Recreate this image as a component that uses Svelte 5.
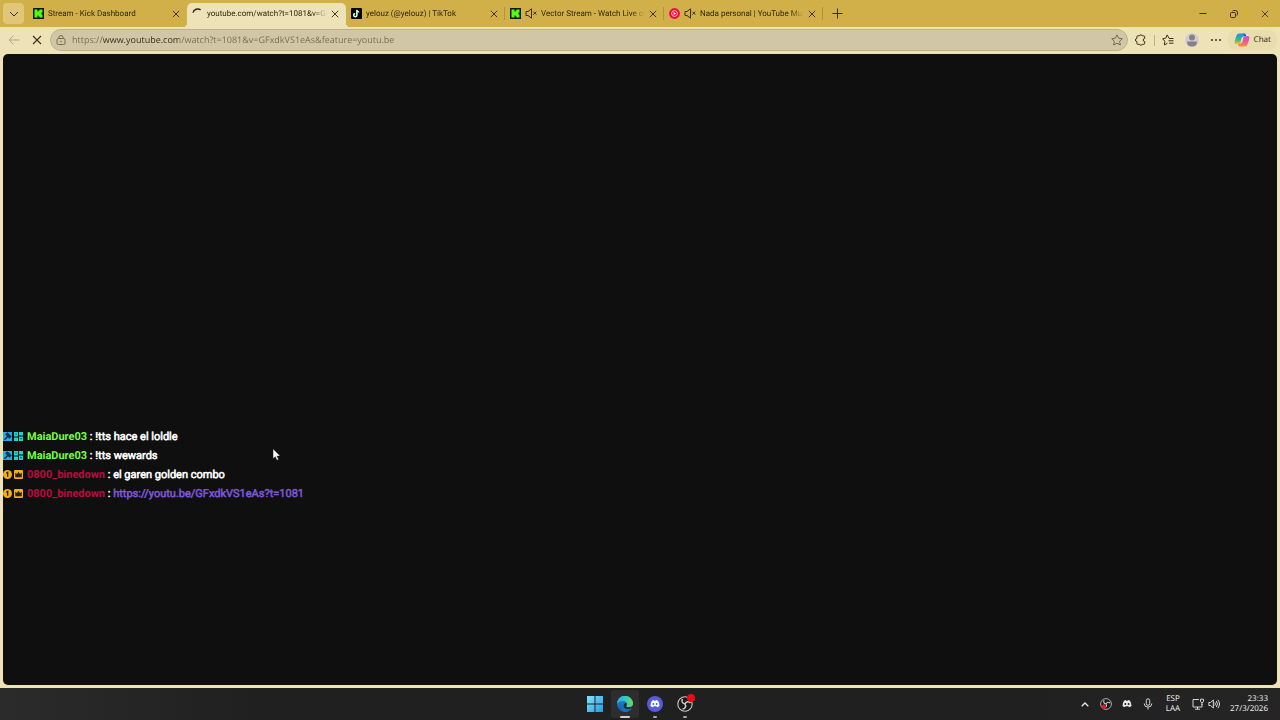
<script lang="ts">
  type Icon = 'kick' | 'spinner' | 'tiktok' | 'ytmusic';
  type Tab = { icon: Icon; title: string; muted?: boolean; active?: boolean };
  type Message = { user: string; role: 'mod' | 'top'; text: string; link?: boolean };

  const tabs: Tab[] = [
    { icon: 'kick', title: 'Stream - Kick Dashboard' },
    { icon: 'spinner', title: 'youtube.com/watch?t=1081&v=GF', active: true },
    { icon: 'tiktok', title: 'yelouz (@yelouz) | TikTok' },
    { icon: 'kick', title: 'Vector Stream - Watch Live on', muted: true },
    { icon: 'ytmusic', title: 'Nada personal | YouTube Music', muted: true }
  ];

  const messages: Message[] = [
    { user: 'MaiaDure03', role: 'mod', text: '!tts hace el loldle' },
    { user: 'MaiaDure03', role: 'mod', text: '!tts wewards' },
    { user: '0800_binedown', role: 'top', text: 'el garen golden combo' },
    { user: '0800_binedown', role: 'top', text: 'https://youtu.be/GFxdkVS1eAs?t=1081', link: true }
  ];

  let address = $state('https://www.youtube.com/watch?t=1081&v=GFxdkVS1eAs&feature=youtu.be');
</script>

{#snippet cross(size: number)}
  <svg width={size} height={size} viewBox="0 0 10 10" fill="none" stroke="currentColor" stroke-width="1.1">
    <path d="M1 1l8 8M9 1L1 9" />
  </svg>
{/snippet}

{#snippet favicon(icon: Icon)}
  <svg class="favicon" viewBox="0 0 11 11">
    {#if icon === 'kick'}
      <rect width="11" height="11" fill="#101c08" />
      <path d="M1.5 1.5h3v2h1v-1h1v-1h3v3h-1v2h1v3h-3v-1h-1v-1h-1v2h-3z" fill="#53fc18" />
    {:else if icon === 'spinner'}
      <path d="M1 4.6A5 5 0 0 1 8.6 1.8" fill="none" stroke="#2b2415" stroke-width="1.5" />
    {:else if icon === 'tiktok'}
      <rect width="11" height="11" rx="1" fill="#050505" />
      <path d="M6 2v5.2a1.6 1.6 0 1 1-1.8-1.6" fill="none" stroke="#25f4ee" stroke-width="1.1" transform="translate(-.4 -.2)" />
      <path d="M6 2v5.2a1.6 1.6 0 1 1-1.8-1.6M6 2.2c.2 1.2 1 1.8 2.2 1.9" fill="none" stroke="#fff" stroke-width="1.2" />
    {:else}
      <circle cx="5.5" cy="5.5" r="5.4" fill="#f5083e" />
      <circle cx="5.5" cy="5.5" r="2.9" fill="none" stroke="#fff" stroke-width=".7" />
      <path d="M4.6 3.9v3.2l2.6-1.6z" fill="#fff" />
    {/if}
  </svg>
{/snippet}

{#snippet obs()}
  <circle cx="8" cy="8" r="7.200" fill="#1b1b1b" stroke="#c9c9c9" stroke-width="1.100" />
  <path d="M8 8C5 7.5 4.300 5 5.500 3M8 8c1.200-2.800 4-3 5.500-1M8 8c1.500 2.300.200 4.800-2.500 5" fill="none" stroke="#c9c9c9" stroke-width="1.500" />
{/snippet}

{#snippet discordFace()}
  <path fill-rule="evenodd" d="M4 3.500Q5.500 2.700 6.500 2.700l.5.900h2l.5-.9q1 0 2.500.8 2.300 3.500 2 7.300-1.500 1.200-3.300 1.600l-.8-1.300H6.100l-.8 1.300Q3.500 12 2 10.800 1.700 7 4 3.500zM5.800 6.600a1.300 1.400 0 1 0 0 2.800 1.300 1.400 0 1 0 0-2.800zm4.400 0a1.300 1.400 0 1 0 0 2.800 1.300 1.400 0 1 0 0-2.800z" />
{/snippet}

<div class="desktop">
  <div class="browser">
    <header class="tab-strip">
      <button class="tab-menu" aria-label="Tab actions">
        <svg width="10" height="6" viewBox="0 0 10 6" fill="none" stroke="currentColor"><path d="M1 1l4 4 4-4" /></svg>
      </button>
      <div class="tabs" role="tablist">
        {#each tabs as tab}
          <div class="tab" class:active={tab.active} role="tab" aria-selected={!!tab.active} tabindex="0">
            {@render favicon(tab.icon)}
            {#if tab.muted}
              <svg class="mute" viewBox="0 0 12 11" fill="none" stroke="currentColor">
                <path d="M1 3.500h2L6.500.8v9.400L3 7.500H1zM8.300 3.700l3 3M11.300 3.700l-3 3" />
              </svg>
            {/if}
            <span class="title">{tab.title}</span>
            <button class="close" aria-label="Close tab">{@render cross(8)}</button>
          </div>
        {/each}
      </div>
      <button class="new-tab" aria-label="New tab">
        <svg width="11" height="11" viewBox="0 0 11 11" fill="none" stroke="currentColor"><path d="M5.500 0.500v10M.5 5.500h10" /></svg>
      </button>
      <div class="window-controls">
        <button aria-label="Minimize">
          <svg width="8" height="8" viewBox="0 0 8 8" stroke="currentColor"><path d="M.5 3.500h7" /></svg>
        </button>
        <button aria-label="Restore">
          <svg width="8" height="8" viewBox="0 0 8 8" fill="none" stroke="currentColor">
            <rect x=".5" y="2.500" width="5" height="5" rx="1" /><path d="M2.500 1q.3-.5 1-.5h2q2 0 2 2v2q0 .7-.5 1" />
          </svg>
        </button>
        <button aria-label="Close window">{@render cross(8)}</button>
      </div>
    </header>

    <nav class="toolbar">
      <button class="back" aria-label="Back" disabled>
        <svg width="12" height="10" viewBox="0 0 12 10" fill="none" stroke="currentColor"><path d="M5.500.8L1 5l4.500 4.200M1 5h10.500" /></svg>
      </button>
      <button class="stop" aria-label="Stop loading">{@render cross(10)}</button>
      <div class="address">
        <svg width="10" height="10" viewBox="0 0 10 10" fill="none" stroke="currentColor">
          <rect x="1" y="3.500" width="8" height="6" rx="1.300" /><path d="M3 3.500V2.200a2 1.700 0 0 1 4 0v1.300" /><circle cx="5" cy="6.500" r=".4" />
        </svg>
        <input type="text" aria-label="Address" spellcheck="false" bind:value={address} />
        <button aria-label="Add to favorites">
          <svg width="12" height="12" viewBox="0 0 12 12" fill="none" stroke="currentColor">
            <path stroke-linejoin="round" d="M6 .8l1.600 3.400 3.700.5-2.700 2.600.7 3.700L6 9.200 2.700 11l.7-3.700L.7 4.700l3.700-.5z" />
          </svg>
        </button>
      </div>
      <button class="extensions" aria-label="Extensions">
        <svg width="12" height="12" viewBox="0 0 12 12" fill="none" stroke="currentColor">
          <path d="M2.800 1.800h1.700a1.400 1.400 0 0 1 2.700 0h1.600q.9 0 .9.900v1.800a1.500 1.500 0 1 0 0 3v1.900q0 .9-.9.900H7.200a1.400 1.400 0 0 1-2.700 0H2.800q-.9 0-.9-.9V7.500a1.400 1.400 0 0 1 0-3V2.700q0-.9.900-.9z" />
        </svg>
      </button>
      <span class="divider"></span>
      <button class="favorites" aria-label="Favorites">
        <svg width="12" height="12" viewBox="0 0 12 12" fill="none" stroke="currentColor">
          <path d="M7 4.200L5.200.9 3.700 4.200.6 4.800l2.200 2.400-.4 3.700 3-1.600M7 4.500h4.500M6.500 6.800h5M7 9.200h4.500" />
        </svg>
      </button>
      <button class="profile" aria-label="Profile">
        <svg width="14" height="14" viewBox="0 0 14 14">
          <circle cx="7" cy="7" r="7" fill="#d3cdca" /><circle cx="7" cy="4.600" r="3" fill="#85808b" />
          <path d="M2 9.500q0-1 1-1h8q1 0 1 1Q11.500 13.500 7 13.500T2 9.500z" fill="#85808b" />
        </svg>
      </button>
      <button class="more" aria-label="Settings and more">
        <svg width="10" height="2" viewBox="0 0 10 2" fill="currentColor"><circle cx="1" cy="1" r="1" /><circle cx="5" cy="1" r="1" /><circle cx="9" cy="1" r="1" /></svg>
      </button>
      <button class="copilot">
        <svg width="16" height="14" viewBox="0 0 16 14">
          <defs>
            <linearGradient id="cp-a" x1="0" y1="0" x2="0" y2="1"><stop stop-color="#1793e8" /><stop offset=".6" stop-color="#37b98a" /><stop offset="1" stop-color="#f3c51b" /></linearGradient>
            <linearGradient id="cp-b" x1="0" y1="0" x2="0" y2="1"><stop stop-color="#b35ee8" /><stop offset=".5" stop-color="#f0568c" /><stop offset="1" stop-color="#f79043" /></linearGradient>
          </defs>
          <path d="M5 .5h5q1.300 0 1.700 1.500L12 3h-1.500Q9 3 8.500 4.500L7 9.500Q6.400 11 5 11H2.500Q0 11 .7 8.200l1.500-5Q3 .5 5 .5z" fill="url(#cp-a)" />
          <path d="M11 13.500H6q-1.300 0-1.700-1.500L4 11h1.500Q7 11 7.500 9.500L9 4.500Q9.600 3 11 3h2.500Q16 3 15.300 5.800l-1.500 5q-.8 2.700-2.800 2.700z" fill="url(#cp-b)" />
          <path d="M8.700 4.300L7.200 9.700" stroke="#ece1b9" stroke-width="1.600" />
          <path d="M9.500.5h.8q1.200 0 1.500 1.500l.2 1h-2.200z" fill="#1d5cc9" />
        </svg>
        Chat
      </button>
    </nav>

    <main class="page">
      <ul class="chat">
        {#each messages as message}
          <li>
            {#if message.role === 'mod'}
              <svg class="badge" viewBox="0 0 9 9">
                <rect width="9" height="9" fill="#24a9e8" /><path d="M1.500 7.700L5 4.200M3.300 2.300l1.200-1 3.200 3.200-1.200 1.200z" stroke="#07324a" stroke-width="1.500" fill="#07324a" />
              </svg>
              <svg class="badge" viewBox="0 0 9 9">
                <path d="M0 0h4v4.500H0zM5 0h4v3.500H5zM0 5.500h4V9H0zM5 4.500h4V9H5z" fill="#13d8cd" /><path d="M1.500 1.500h1.200v1.300H1.500zM6.300 6h1.300v1.300H6.300z" fill="#07504d" />
              </svg>
            {:else}
              <svg class="badge" viewBox="0 0 9 9">
                <circle cx="4.500" cy="4.500" r="4.500" fill="#f5ad19" /><path d="M3.300 3.200l1.400-.9v4.500" stroke="#1b1405" stroke-width="1.200" fill="none" />
              </svg>
              <svg class="badge" viewBox="0 0 9 9">
                <rect width="9" height="9" rx="1" fill="#f5ad19" /><path d="M1.300 2.800l1.700 1.300 1.500-2.300L6 4.100l1.700-1.300v4.400H1.300z" fill="#2a1c03" />
              </svg>
            {/if}
            <span class="line">
              <b class={message.role}>{message.user}</b> :
              {#if message.link}<a href={message.text}>{message.text}</a>{:else}{message.text}{/if}
            </span>
          </li>
        {/each}
      </ul>
    </main>
  </div>

  <footer class="taskbar">
    <div class="apps">
      <button aria-label="Start">
        <svg width="16" height="16" viewBox="0 0 16 16">
          <defs><linearGradient id="win" x2="1" y2="1"><stop stop-color="#85e3fb" /><stop offset="1" stop-color="#219ce5" /></linearGradient></defs>
          <path d="M0 0h7.500v7.500H0zM8.500 0H16v7.500H8.500zM0 8.500h7.500V16H0zM8.500 8.500H16V16H8.500z" fill="url(#win)" />
        </svg>
      </button>
      <button class="current" aria-label="Edge">
        <svg width="16" height="16" viewBox="0 0 16 16">
          <defs>
            <linearGradient id="edge-top" x2="1"><stop stop-color="#2fa9e8" /><stop offset=".5" stop-color="#32c7c8" /><stop offset="1" stop-color="#68db55" /></linearGradient>
            <linearGradient id="edge-low" x2="0" y2="1"><stop stop-color="#1b8fdc" /><stop offset="1" stop-color="#1258a8" /></linearGradient>
          </defs>
          <circle cx="8" cy="8" r="8" fill="url(#edge-low)" />
          <path d="M0 8a8 8 0 0 1 16-.5Q16 11 12 11.200q-3 0-2.800-1.200.8-.6.800-2Q9.700 5 6 5 2 5 0 8z" fill="url(#edge-top)" />
          <path d="M9.200 10Q9 11.300 12 11.200q2.500 0 4-1.700v2.800L14.700 12Q12 14 9 13q-4-1.500-2-5Q8 6.700 9.500 7q.6 2-.3 3z" fill="#2d2d2d" />
          <path d="M7 8q-2 3.500 2 5 3 1 5.700-1Q12.500 16 8 16 4 15.500 4 11.500 4.200 9 7 8z" fill="#1672c0" />
        </svg>
      </button>
      <button class="running" aria-label="Discord">
        <svg width="16" height="16" viewBox="0 0 16 16">
          <circle cx="8" cy="8" r="8" fill="#515ddb" />
          <g fill="#fff" transform="translate(2 2) scale(.75)">{@render discordFace()}</g>
        </svg>
      </button>
      <button class="running" aria-label="OBS Studio">
        <svg width="16" height="16" viewBox="0 0 16 16">{@render obs()}</svg>
        <span class="recording"></span>
      </button>
    </div>
    <div class="tray">
      <button aria-label="Show hidden icons">
        <svg width="8" height="5" viewBox="0 0 8 5" fill="none" stroke="currentColor" stroke-width="1.300"><path d="M.7 4.300L4 1l3.300 3.300" /></svg>
      </button>
      <button aria-label="OBS status">
        <svg width="12" height="12" viewBox="0 0 16 16">{@render obs()}<circle cx="5" cy="11.500" r="3" fill="#e31824" /></svg>
      </button>
      <button aria-label="Discord status">
        <svg width="12" height="12" viewBox="0 0 16 16" fill="currentColor">{@render discordFace()}</svg>
      </button>
      <button aria-label="Microphone">
        <svg width="10" height="12" viewBox="0 0 10 12" fill="none" stroke="currentColor" stroke-width=".9">
          <rect x="3.300" y=".8" width="3.400" height="6.500" rx="1.700" /><path d="M1.200 5.500a3.800 3.600 0 0 0 7.600 0M5 9.200v2.300" />
        </svg>
      </button>
      <button class="language">ESP<br />LAA</button>
      <button class="system" aria-label="Network and volume">
        <svg width="12" height="12" viewBox="0 0 12 12" fill="none" stroke="currentColor" stroke-width=".9">
          <path d="M7 1.500H1v7.500h9V6M3 11.200h5M5.500 9v2M8.500 1.200h3v2.300q-.3 1-1.500 1t-1.500-1zM10 4.500V7" />
        </svg>
        <svg width="12" height="12" viewBox="0 0 12 12" fill="none" stroke="currentColor" stroke-width=".9">
          <path d="M.8 4.500h1.700L5.300 2v8L2.500 7.500H.8zM6.800 4.500q1.200 1.500 0 3M8.300 3q2.400 3 0 6M9.800 1.800q3.400 4.200 0 8.400" />
        </svg>
      </button>
      <button class="clock"><time datetime="2026-03-27T23:33">23:33<br />27/3/2026</time></button>
    </div>
  </footer>

  <svg class="pointer" width="9" height="13" viewBox="0 0 9 13">
    <path d="M1 .8v10l2.300-2.100 1.500 3.500 1.800-.8-1.500-3.300h3.200z" fill="#fff" stroke="#111" stroke-width=".5" />
  </svg>
</div>

<style>
:global(body) { margin: 0; }
* { box-sizing: border-box; }
.desktop {
  position: relative;
  display: flex;
  flex-direction: column;
  min-height: 100vh;
  font: 8px/12px "Noto Sans", sans-serif;
  text-rendering: geometricPrecision;
  color: #3b3015;
}
svg { display: block; flex: none; }
button {
  display: flex;
  align-items: center;
  justify-content: center;
  padding: 0;
  border: 0;
  background: none;
  font: inherit;
  text-rendering: inherit;
  color: inherit;
}
.browser {
  flex: 1;
  display: flex;
  flex-direction: column;
  background: #ede2b8;
}

.tab-strip {
  display: flex;
  height: 27px;
  background: #d1b04a;
}
.tab-menu {
  width: 21px;
  height: 21px;
  margin: 3px 4px 3px 3px;
  border-radius: 4px;
  background: #e0c778;
}
.tabs { display: flex; min-width: 0; }
.tab {
  position: relative;
  display: flex;
  align-items: center;
  gap: 4px;
  flex: 0 1 159px;
  width: 159px;
  min-width: 0;
  padding: 0 7px 0 5px;
}
.tab::after {
  content: '';
  position: absolute;
  right: 0;
  top: 7px;
  width: 1px;
  height: 13px;
  background: #b1943c;
}
.tab:first-child::after { display: none; }
.tab.active {
  margin-top: 3px;
  padding-bottom: 3px;
  border-radius: 5px 5px 0 0;
  background: #ede2b8;
}
/* flared feet where the active tab meets the toolbar */
.tab.active::before, .tab.active::after {
  content: '';
  position: absolute;
  top: auto;
  bottom: 0;
  width: 4px;
  height: 4px;
}
.tab.active::before {
  left: -4px;
  background: radial-gradient(circle at 0 0, transparent 4px, #ede2b8 4px);
}
.tab.active::after {
  right: -4px;
  background: radial-gradient(circle at 4px 0, transparent 4px, #ede2b8 4px);
}
.favicon { width: 11px; height: 11px; }
.mute { width: 12px; height: 11px; }
.title {
  flex: 1;
  overflow: hidden;
  white-space: nowrap;
  font-family: Roboto, sans-serif;
  color: #2f260f;
  mask-image: linear-gradient(to right, #000 calc(100% - 14px), transparent);
}
.close { width: 8px; color: #2f260f; }
.new-tab { width: 28px; }
.window-controls { display: flex; margin-left: auto; }
.window-controls button { width: 31px; }

.toolbar {
  display: flex;
  align-items: center;
  height: 27px;
  padding: 0 3px 1px;
}
.back { width: 22px; color: #b2a786; }
.stop { width: 24px; }
.address {
  flex: 1;
  display: flex;
  align-items: center;
  gap: 6px;
  min-width: 0;
  height: 22px;
  margin-left: 1px;
  padding: 0 4px 0 5px;
  border: 1px solid #bdb28e;
  border-radius: 11px;
  background: #d1c6a5;
  color: #766c50;
}
.address input {
  flex: 1;
  min-width: 0;
  padding: 0;
  border: 0;
  outline: 0;
  font: 9px/16px "Open Sans", sans-serif;
  text-rendering: inherit;
  color: transparent;
  /* dims the scheme and path, keeps the host dark */
  background: linear-gradient(to right, #766c4f 30px, #352c15 30px 107px, #766c4f 107px);
  background-clip: text;
}
.extensions { width: 26px; }
.divider { width: 1px; height: 11px; background: #beb38d; }
.favorites { width: 26px; }
.profile { width: 23px; }
.more { width: 24px; }
.copilot {
  gap: 4px;
  height: 20px;
  padding: 0 6px;
  border-radius: 8px;
  background: #e9dcaf;
}

.page {
  flex: 1;
  display: flex;
  flex-direction: column;
  justify-content: flex-end;
  margin: 0 3px 3px;
  padding-bottom: 182px;
  border-radius: 5px;
  background: #0f0f0f;
}
.chat {
  margin: 0;
  padding: 0;
  list-style: none;
  font: 400 11px/19px Roboto, sans-serif;
  -webkit-text-stroke: 0.05em currentColor;
  color: #fff;
}
.chat li { display: flex; align-items: center; gap: 2px; }
.badge { width: 9px; height: 9px; }
.line { margin-left: 2px; }
.chat b { font-weight: 700; -webkit-text-stroke: 0; }
.mod { color: #75fd46; }
.top { color: #bc0a3f; }
.chat a { color: #7d56d6; text-decoration: none; -webkit-text-stroke-color: #7d56d6; }

.taskbar {
  display: grid;
  grid-template-columns: 1fr auto 1fr;
  height: 32px;
  background: linear-gradient(to right, #2b2b2b, #202020 20%, #202020 80%, #252525);
  color: #e8e8e8;
}
.apps {
  grid-column: 2;
  display: flex;
  align-items: center;
  gap: 2px;
}
.apps button {
  position: relative;
  width: 28px;
  height: 28px;
  border-radius: 3px;
}
.apps .current { background: #2d2d2d; }
.current::after, .running::after {
  content: '';
  position: absolute;
  left: 12px;
  bottom: 0;
  width: 4px;
  height: 2px;
  border-radius: 1px;
  background: #a5a5a5;
}
.current::after { left: 9px; width: 10px; background: #cfcfcf; }
.recording {
  position: absolute;
  top: 4px;
  right: 4px;
  width: 8px;
  height: 8px;
  border-radius: 4px;
  background: #f00813;
}
.tray {
  display: flex;
  justify-content: flex-end;
  align-items: center;
  padding-right: 12px;
  line-height: 10px;
}
.tray button { width: 21px; height: 28px; }
.tray .language { width: 30px; }
.tray .system { gap: 4px; width: 36px; }
.tray .clock { width: 44px; justify-content: flex-end; text-align: right; }
.pointer { position: absolute; left: 272px; top: 448px; }
</style>
